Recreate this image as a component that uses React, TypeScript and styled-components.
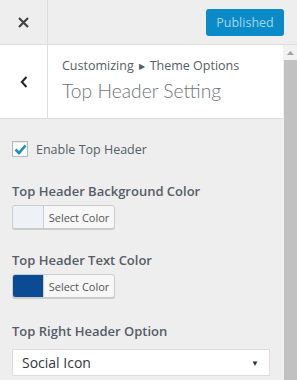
import React from "react";
import styled, { createGlobalStyle } from "styled-components";

const Global = createGlobalStyle`
  html, body { margin: 0; padding: 0; }
  body {
    font-family: "Open Sans", "Noto Sans", sans-serif;
    background: #eeeeee;
    color: #555d66;
    width: 297px;
    height: 380px;
    overflow: hidden;
  }
`;

const Shell = styled.div`
  width: 297px;
  height: 380px;
  display: flex;
  flex-direction: column;
  background: #eeeeee;
`;

const TopBar = styled.div`
  height: 44px;
  display: flex;
  align-items: center;
  border-bottom: 1px solid #dddddd;
  background: #eeeeee;
  flex-shrink: 0;
`;

const CloseBox = styled.div`
  width: 48px;
  height: 44px;
  border-right: 1px solid #dddddd;
  display: flex;
  align-items: center;
  justify-content: center;
  box-sizing: border-box;
`;

const Spacer = styled.div`
  flex: 1;
`;

const PublishButton = styled.button`
  width: 78px;
  height: 27px;
  margin-right: 13px;
  border: none;
  border-radius: 3px;
  background: #0a8ac7;
  color: #a6d6ec;
  font-family: "Open Sans", sans-serif;
  font-size: 12.5px;
  padding: 0;
`;

const Body = styled.div`
  flex: 1;
  display: flex;
  min-height: 0;
`;

const Main = styled.div`
  flex: 1;
  display: flex;
  flex-direction: column;
`;

const SectionHead = styled.div`
  height: 73px;
  display: flex;
  background: #ffffff;
  border-bottom: 1px solid #dddddd;
`;

const BackBox = styled.div`
  width: 48px;
  border-right: 1px solid #dddddd;
  display: flex;
  align-items: center;
  justify-content: center;
  box-sizing: border-box;
`;

const Titles = styled.div`
  padding: 12px 0 0 14px;
  display: flex;
  flex-direction: column;
`;

const Crumb = styled.div`
  font-size: 12.5px;
  line-height: 18px;
  color: #555d66;
  white-space: nowrap;
  display: flex;
  align-items: center;
  gap: 5px;
`;

const CrumbArrow = styled.span`
  font-size: 8px;
  color: #555d66;
`;

const Title = styled.div`
  font-family: Lato, "Open Sans", sans-serif;
  font-size: 19.3px;
  font-weight: 300;
  line-height: 26px;
  margin-top: 3px;
  color: #6e747b;
  white-space: nowrap;
`;

const Controls = styled.div`
  padding: 22px 12px 0 12px;
  display: flex;
  flex-direction: column;
`;

const CheckRow = styled.label`
  display: flex;
  align-items: center;
  gap: 8px;
  font-size: 12.5px;
  color: #555d66;
  height: 16px;
`;

const CheckBox = styled.span`
  width: 16px;
  height: 16px;
  box-sizing: border-box;
  border: 1px solid #b4b9be;
  background: #ffffff;
  display: flex;
  align-items: center;
  justify-content: center;
  box-shadow: inset 0 1px 2px rgba(0, 0, 0, 0.1);
`;

const FieldLabel = styled.div<{ $top: number }>`
  margin-top: ${(p) => p.$top}px;
  font-size: 13px;
  font-weight: 600;
  color: #555d66;
  line-height: 18px;
  white-space: nowrap;
`;

const ColorButton = styled.div`
  margin-top: 5px;
  width: 103px;
  height: 24px;
  box-sizing: border-box;
  border: 1px solid #cccccc;
  border-radius: 3px;
  display: flex;
  background: #f7f7f7;
  box-shadow: 0 1px 0 #cccccc;
  overflow: hidden;
`;

const Swatch = styled.span<{ $color: string }>`
  width: 30px;
  background: ${(p) => p.$color};
  border-right: 1px solid #cccccc;
`;

const ColorText = styled.span`
  flex: 1;
  display: flex;
  align-items: center;
  justify-content: center;
  font-size: 11px;
  color: #555555;
`;

const SelectBox = styled.div`
  margin-top: 9px;
  width: 258px;
  height: 27px;
  box-sizing: border-box;
  border: 1px solid #dddddd;
  background: #ffffff;
  display: flex;
  align-items: center;
  justify-content: space-between;
  padding: 0 10px 0 9px;
  font-size: 14px;
  color: #32373c;
`;

const Caret = styled.span`
  font-size: 8px;
  color: #32373c;
`;

const ScrollTrack = styled.div`
  width: 14px;
  display: flex;
  flex-direction: column;
  background: #f1f1f1;
`;

const ScrollArrow = styled.div`
  height: 15px;
  display: flex;
  align-items: center;
  justify-content: center;
  background: #f1f1f1;
`;

const ScrollThumb = styled.div`
  flex: 1;
  margin-left: 1px;
  background: #c1c1c1;
`;

export default function App() {
  return (
    <Shell>
      <Global />
      <TopBar>
        <CloseBox>
          <svg width="11" height="11" viewBox="0 0 11 11">
            <path d="M1 1L10 10M10 1L1 10" stroke="#444" strokeWidth="2.2" />
          </svg>
        </CloseBox>
        <Spacer />
        <PublishButton>Published</PublishButton>
      </TopBar>
      <Body>
        <Main>
          <SectionHead>
            <BackBox>
              <svg width="8" height="12" viewBox="0 0 8 12">
                <path d="M6.5 1L1.8 6L6.5 11" fill="none" stroke="#222" strokeWidth="2" />
              </svg>
            </BackBox>
            <Titles>
              <Crumb>
                Customizing
                <CrumbArrow>▶</CrumbArrow>
                Theme Options
              </Crumb>
              <Title>Top Header Setting</Title>
            </Titles>
          </SectionHead>
          <Controls>
            <CheckRow>
              <CheckBox>
                <svg width="13" height="11" viewBox="0 0 13 11">
                  <path d="M1.5 5.5L5 9L11.5 1.5" fill="none" stroke="#1e8cbe" strokeWidth="2.6" />
                </svg>
              </CheckBox>
              Enable Top Header
            </CheckRow>
            <FieldLabel $top={25}>Top Header Background Color</FieldLabel>
            <ColorButton>
              <Swatch $color="#eef2f7" />
              <ColorText>Select Color</ColorText>
            </ColorButton>
            <FieldLabel $top={22}>Top Header Text Color</FieldLabel>
            <ColorButton>
              <Swatch $color="#0b4b94" />
              <ColorText>Select Color</ColorText>
            </ColorButton>
            <FieldLabel $top={24}>Top Right Header Option</FieldLabel>
            <SelectBox>
              Social Icon
              <Caret>▼</Caret>
            </SelectBox>
          </Controls>
        </Main>
        <ScrollTrack>
          <ScrollArrow>
            <svg width="7" height="4" viewBox="0 0 7 4">
              <path d="M0 4L3.5 0L7 4Z" fill="#a3a3a3" />
            </svg>
          </ScrollArrow>
          <ScrollThumb />
        </ScrollTrack>
      </Body>
    </Shell>
  );
}
